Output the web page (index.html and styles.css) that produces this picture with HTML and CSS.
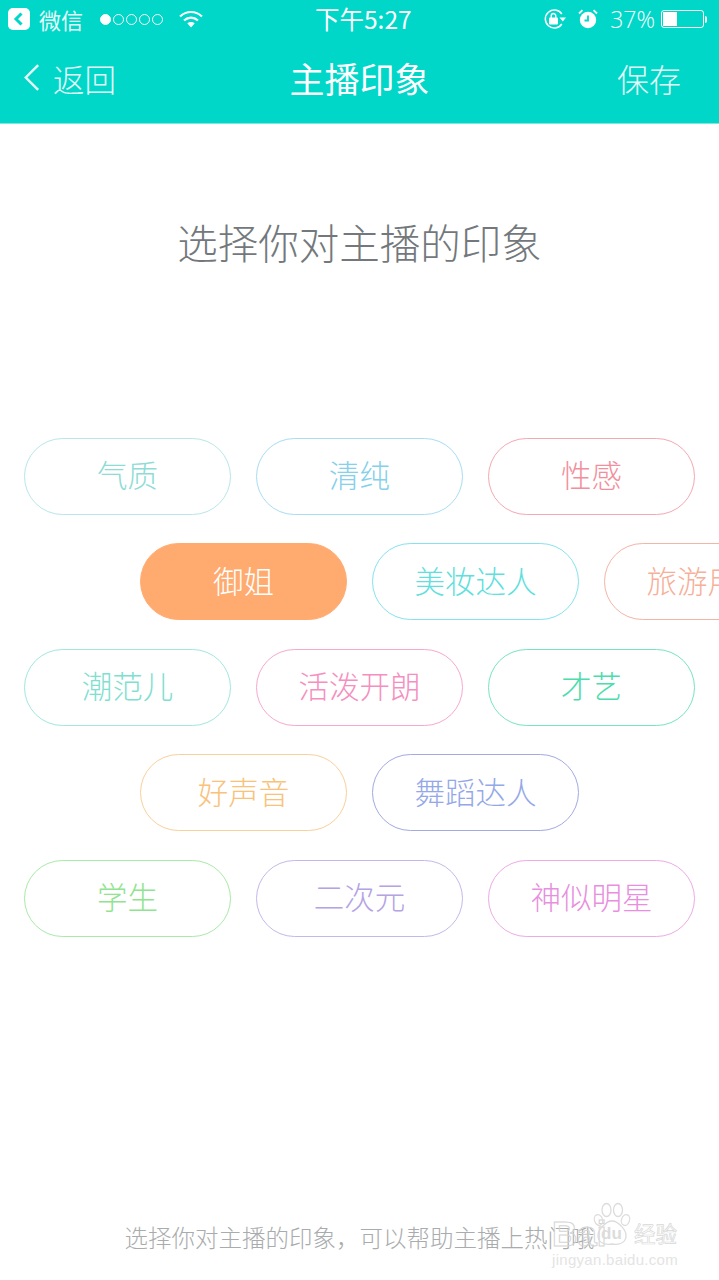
FILE: index.html
```html
<!DOCTYPE html>
<html lang="zh">
<head>
<meta charset="utf-8">
<title>主播印象</title>
<link rel="stylesheet" href="styles.css">
</head>
<body>
<div class="page">
  <header class="header">
    <div class="status">
      <div class="status-left">
        <svg class="wx-back" viewBox="0 0 22 22"><rect width="22" height="22" rx="5" fill="#fff"/><path d="M13.500 5.500 8 11l5.500 5.500" fill="none" stroke="#00d7c8" stroke-width="3"/></svg>
        <span class="st-app">微信</span>
        <span class="dots"><i class="dot on"></i><i class="dot"></i><i class="dot"></i><i class="dot"></i><i class="dot"></i></span>
        <svg class="wifi" viewBox="0 0 24 18"><path d="M1 6.500C7.500.5 16.500.5 23 6.500" fill="none" stroke="#fff" stroke-width="2.200"/><path d="M5 10.500c4.200-3.800 9.800-3.800 14 0" fill="none" stroke="#fff" stroke-width="2.200"/><path d="M8.300 13.300c2.200-1.700 5.200-1.700 7.400 0L12 17.500z" fill="#fff"/></svg>
      </div>
      <div class="st-time">下午5:27</div>
      <div class="status-right">
        <svg class="lock" viewBox="0 0 24 22"><path d="M18.800 16A9 9 0 1 1 18.800 6" fill="none" stroke="#fff" stroke-width="1.500"/><path d="M16.500 9.500H23l-3.200 4z" fill="#fff"/><rect x="6" y="9.500" width="9" height="7" rx="1" fill="#fff"/><path d="M8.200 10V7.800a2.300 2.300 0 0 1 4.600 0V10" fill="none" stroke="#fff" stroke-width="1.400"/></svg>
        <svg class="alarm" viewBox="0 0 20 20"><circle cx="10" cy="11" r="8.200" fill="#fff"/><path d="M10 6.500v5H6.500" fill="none" stroke="#00d7c8" stroke-width="1.800"/><path d="M1 4.500 4.500 1.200M19 4.500 15.500 1.200" stroke="#fff" stroke-width="1.800"/></svg>
        <span class="st-batt">37%</span>
        <span class="battery"><span class="battery-fill" style="width:37%"></span></span>
        <span class="battery-tip"></span>
      </div>
    </div>
    <nav class="nav">
      <div class="nav-back">
        <svg class="chev" viewBox="0 0 20 30"><path d="M17 2 4 15l13 13" fill="none" stroke="#e4fbf8" stroke-width="2.600"/></svg>
        <span>返回</span>
      </div>
      <div class="nav-title">主播印象</div>
      <div class="nav-save">保存</div>
    </nav>
  </header>
  <main class="main">
    <h1 class="prompt">选择你对主播的印象</h1>
    <div class="tags">
      <div class="row">
        <span class="tag c-teal">气质</span>
        <span class="tag c-sky">清纯</span>
        <span class="tag c-rose">性感</span>
      </div>
      <div class="row row-in">
        <span class="tag tag-on">御姐</span>
        <span class="tag c-cyan">美妆达人</span>
        <span class="tag c-salmon">旅游用户</span>
      </div>
      <div class="row">
        <span class="tag c-aqua">潮范儿</span>
        <span class="tag c-pink">活泼开朗</span>
        <span class="tag c-green">才艺</span>
      </div>
      <div class="row row-in">
        <span class="tag c-amber">好声音</span>
        <span class="tag c-blue">舞蹈达人</span>
      </div>
      <div class="row">
        <span class="tag c-lime">学生</span>
        <span class="tag c-violet">二次元</span>
        <span class="tag c-orchid">神似明星</span>
      </div>
    </div>
  </main>
  <footer class="foot">选择你对主播的印象，可以帮助主播上热门哦</footer>
  <div class="mark">
    <div class="mark-top">
      <span class="mark-bai">Bai</span>
      <svg class="paw" viewBox="0 0 38 44"><g fill="none" stroke="#dcdcdc" stroke-width="1.300"><ellipse cx="5.500" cy="18" rx="4" ry="5.500" transform="rotate(-20 5.500 18)"/><ellipse cx="13.500" cy="8" rx="4.500" ry="6.500"/><ellipse cx="25" cy="8" rx="4.500" ry="6.500"/><ellipse cx="32.500" cy="18" rx="4" ry="5.500" transform="rotate(20 32.500 18)"/><path d="M19 19c6 0 15 9 14 16-1 7-9 8-14 7-5 1-13 0-14-7-1-7 8-16 14-16z"/></g></svg>
      <span class="mark-du">du</span>
      <span class="mark-jy">经验</span>
    </div>
    <div class="mark-url">jingyan.baidu.com</div>
  </div>
</div>
</body>
</html>
```
FILE: styles.css
```css
* { box-sizing: border-box; }
html, body { margin: 0; padding: 0; }
body {
  width: 719px;
  height: 1280px;
  overflow: hidden;
  background: #fff;
  font-family: "Noto Sans CJK SC", "Noto Sans", sans-serif;
}
.page { position: relative; width: 719px; height: 1280px; overflow: hidden; display: flex; flex-direction: column; }

.header { height: 124px; background: #00d7c8; color: #fff; border-bottom: 1px solid #7fe6de; flex: none; }
.status { height: 38px; display: flex; align-items: center; justify-content: space-between; padding: 0 12px 0 8px; position: relative; }
.status-left, .status-right { display: flex; align-items: center; }
.wx-back { width: 22px; height: 22px; }
.st-app { font-size: 22px; margin-left: 9px; line-height: 1; color: #e6fbf9; }
.dots { display: flex; gap: 2px; margin-left: 17px; }
.dot { width: 11px; height: 11px; border: 1px solid #fff; border-radius: 50%; }
.dot.on { background: #fff; }
.wifi { width: 24px; height: 18px; margin-left: 16px; }
.st-time { position: absolute; left: 315px; top: 4px; font-size: 24.500px; line-height: 30px; width: 100px; white-space: nowrap; }
.lock { width: 24px; height: 22px; margin-right: 11px; }
.alarm { width: 20px; height: 20px; margin-right: 12px; }
.st-batt { font-size: 23px; line-height: 1; font-family: "Open Sans", sans-serif; font-weight: 300; margin-right: 6px; }
.battery { width: 43px; height: 18px; border: 1.500px solid #fff; border-radius: 3px; padding: 1px; display: block; }
.battery-fill { display: block; height: 100%; background: #fff; }
.battery-tip { width: 2px; height: 7px; background: #fff; margin-left: 1px; border-radius: 0 2px 2px 0; }

.nav { height: 85px; padding: 0 38px 6px 22px; display: flex; align-items: center; justify-content: space-between; position: relative; }
.nav-back { display: flex; align-items: center; gap: 12px; font-size: 31.500px; color: #e4fbf8; font-weight: 300; }
.chev { width: 19px; height: 29px; }
.nav-title { position: absolute; left: 0; right: 0; text-align: center; font-size: 35px; font-weight: 400; pointer-events: none; }
.nav-save { font-size: 32px; color: #e4fbf8; font-weight: 300; }

.main { flex: 1; display: flex; flex-direction: column; align-items: center; }
.prompt { margin: 89px 0 0; font-size: 40.500px; line-height: 58px; font-weight: 300; color: #73787c; white-space: nowrap; }
.tags { align-self: stretch; margin-top: 166.600px; display: flex; flex-direction: column; gap: 28.500px; }
.row { display: flex; gap: 25px; padding-left: 24px; white-space: nowrap; }
.row-in { padding-left: 140px; }
.tag {
  flex: none;
  width: 207px;
  height: 77px;
  border: 1px solid currentColor;
  border-radius: 38.500px;
  display: flex;
  align-items: center;
  justify-content: center;
  padding-bottom: 4px;
  font-size: 30.500px;
  font-weight: 300;
  overflow: hidden;
  background: #fff;
}
.tag-on { background: #ffab70; border-color: #ffab70; color: #fff; }
.c-teal { color: #8fdcd5; border-color: #b8e6ea; }
.c-sky { color: #85d0ea; border-color: #a8ddf2; }
.c-rose { color: #f28f9c; border-color: #f5a8b2; }
.c-cyan { color: #5fdfdd; border-color: #86e2ee; }
.c-salmon { color: #f5b09a; border-color: #f3b5a6; }
.c-aqua { color: #7fe0d0; border-color: #a0e8dc; }
.c-pink { color: #f58fc0; border-color: #f7a8ce; }
.c-green { color: #4cdcae; border-color: #76e4c2; }
.c-amber { color: #f9c27a; border-color: #fad09a; }
.c-blue { color: #94a8e8; border-color: #a2aae0; }
.c-lime { color: #90e490; border-color: #a8eaa8; }
.c-violet { color: #b4a4e4; border-color: #c4b8ea; }
.c-orchid { color: #e88fde; border-color: #eeaae6; }

.foot { flex: none; text-align: center; font-size: 23.500px; line-height: 34px; color: #a9acad; font-weight: 300; padding-bottom: 26px; white-space: nowrap; }

.mark { position: absolute; left: 552px; top: 1202px; width: 130px; }
.mark-top { display: flex; align-items: flex-start; height: 49px; position: relative; }
.mark-bai { font-family: "Liberation Sans", sans-serif; font-size: 35px; line-height: 40px; font-weight: 700; color: transparent; -webkit-text-stroke: 1px #d4d4d4; width: 41px; margin-top: 12px; }
.paw { width: 38px; height: 44px; flex: none; }
.mark-du { position: absolute; left: 49px; top: 22px; font-family: "Liberation Sans", sans-serif; font-size: 17px; line-height: 20px; font-weight: 700; color: #dcdcdc; }
.mark-jy { font-size: 21.500px; line-height: 22px; color: transparent; -webkit-text-stroke: 0.700px #d8d8d8; margin-left: 3px; margin-top: 20px; white-space: nowrap; }
.mark-url { font-family: "Liberation Sans", sans-serif; font-size: 15px; line-height: 18px; color: #e4e4e4; letter-spacing: 0.300px; white-space: nowrap; }
```
